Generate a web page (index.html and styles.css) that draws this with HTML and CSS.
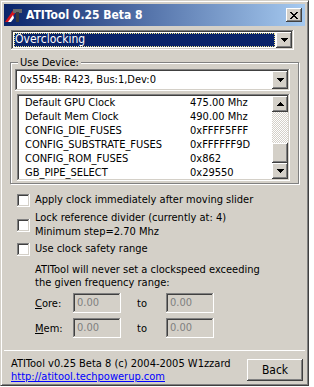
FILE: index.html
```html
<!DOCTYPE html>
<html lang="en">
<head>
  <meta charset="utf-8">
  <title>ATITool 0.25 Beta 8</title>
  <link rel="stylesheet" href="styles.css">
</head>
<body>
  <div class="window">
    <div class="titlebar">
      <svg class="app-icon" width="18" height="16" viewBox="0 0 18 16">
        <polygon points="0,15 9,2 13,2 4,15" fill="#d8141c" />
        <polygon points="3,15 8,8 9,11 6,15" fill="#fff" />
        <rect x="8" y="2" width="9" height="4" fill="#6a6a6a" />
        <rect x="11" y="5" width="3" height="10" fill="#3a3a3a" />
      </svg>
      <span class="title">ATITool 0.25 Beta 8</span>
      <span class="close-btn">
        <svg width="8" height="7" viewBox="0 0 8 7">
          <path d="M0 0h2v1h1v1h2v-1h1v-1h2v1h-1v1h-1v1h-1v1h1v1h1v1h1v1h-2v-1h-1v-1h-2v1h-1v1h-2v-1h1v-1h1v-1h1v-1h-1v-1h-1v-1h-1z" fill="#000" />
        </svg>
      </span>
    </div>

    <div class="panel">
      <div class="combo combo-page">
        <div class="combo-value"><span class="focus">Overclocking</span></div>
        <span class="combo-btn">
          <svg width="7" height="4" viewBox="0 0 7 4"><path d="M0 0h7v1h-1v1h-1v1h-1v1h-1v-1h-1v-1h-1v-1h-1z" /></svg>
        </span>
      </div>

      <div class="group">
        <span class="legend">Use Device:</span>
        <div class="combo combo-device">
          <div class="combo-value">0x554B: R423, Bus:1,Dev:0</div>
          <span class="combo-btn">
            <svg width="7" height="4" viewBox="0 0 7 4"><path d="M0 0h7v1h-1v1h-1v1h-1v1h-1v-1h-1v-1h-1v-1h-1z" /></svg>
          </span>
        </div>
        <div class="listbox">
          <table class="props">
            <tr><td>Default GPU Clock</td><td>475.00 Mhz</td></tr>
            <tr><td>Default Mem Clock</td><td>490.00 Mhz</td></tr>
            <tr><td>CONFIG_DIE_FUSES</td><td>0xFFFF5FFF</td></tr>
            <tr><td>CONFIG_SUBSTRATE_FUSES</td><td>0xFFFFFF9D</td></tr>
            <tr><td>CONFIG_ROM_FUSES</td><td>0x862</td></tr>
            <tr><td>GB_PIPE_SELECT</td><td>0x29550</td></tr>
          </table>
          <div class="scrollbar">
            <span class="sb-btn">
              <svg width="7" height="4" viewBox="0 0 7 4"><path d="M3 0h1v1h1v1h1v1h1v1h-7v-1h1v-1h1v-1h1z" /></svg>
            </span>
            <span class="sb-track"></span>
            <span class="sb-thumb"></span>
            <span class="sb-btn">
              <svg width="7" height="4" viewBox="0 0 7 4"><path d="M0 0h7v1h-1v1h-1v1h-1v1h-1v-1h-1v-1h-1v-1h-1z" /></svg>
            </span>
          </div>
        </div>
      </div>

      <div class="check check-apply">
        <span class="box"></span>
        <span class="check-label">Apply clock immediately after moving slider</span>
      </div>
      <div class="check check-lock">
        <span class="box"></span>
        <span class="check-label">Lock reference divider (currently at: 4)<br>Minimum step=2.70 Mhz</span>
      </div>
      <div class="check check-range">
        <span class="box"></span>
        <span class="check-label">Use clock safety range</span>
      </div>

      <p class="note">ATITool will never set a clockspeed exceeding<br>the given frequency range:</p>

      <div class="range-row">
        <span class="range-label"><u>C</u>ore:</span>
        <span class="field">0.00</span>
        <span class="to">to</span>
        <span class="field">0.00</span>
      </div>
      <div class="range-row">
        <span class="range-label"><u>M</u>em:</span>
        <span class="field">0.00</span>
        <span class="to">to</span>
        <span class="field">0.00</span>
      </div>
    </div>

    <div class="separator"></div>

    <div class="footer">
      <div class="credits">
        ATITool v0.25 Beta 8 (c) 2004-2005 W1zzard<br>
        <a href="#">http://atitool.techpowerup.com</a>
      </div>
      <span class="button">Back</span>
    </div>
  </div>
</body>
</html>
```

FILE: styles.css
```css
body {
  margin: 0;
  background: #fff;
  font-family: "DejaVu Sans Condensed", "DejaVu Sans", sans-serif;
  font-size: 11px;
  color: #000;
}

.window {
  width: 309px;
  height: 386px;
  box-sizing: border-box;
  background: #d4d0c8;
  border: 1px solid;
  border-color: #d4d0c8 #404040 #404040 #d4d0c8;
  box-shadow: inset 1px 1px #fff, inset -1px -1px #808080;
  padding: 3px;
  display: flex;
  flex-direction: column;
}

/* title bar */
.titlebar {
  height: 22px;
  flex: none;
  display: flex;
  align-items: center;
  padding: 0 3px 0 1px;
  background: linear-gradient(to right, #0a246a, #a6caf0);
  color: #fff;
}

.app-icon {
  margin-right: 3px;
}

.title {
  flex: 1;
  font-weight: bold;
  font-size: 12px;
}

.close-btn {
  width: 16px;
  height: 14px;
  display: flex;
  align-items: center;
  justify-content: center;
  background: #d4d0c8;
  box-shadow: inset -1px -1px #404040, inset 1px 1px #fff, inset -2px -2px #808080, inset 2px 2px #d4d0c8;
}

.panel {
  padding: 4px 4px 0 6px;
}

/* combo boxes */
.combo {
  display: flex;
  background: #fff;
  padding: 2px;
  box-shadow: inset -1px -1px #fff, inset 1px 1px #808080, inset -2px -2px #d4d0c8, inset 2px 2px #404040;
}

.combo-page {
  height: 20px;
  box-sizing: border-box;
  margin: 0 7px 0 1px;
}

.combo-page .combo-value {
  flex: 1;
  padding: 1px;
}

.focus {
  display: block;
  height: 100%;
  box-sizing: border-box;
  background: #0a246a;
  color: #fff;
  font-size: 12px;
  line-height: 12px;
  padding-left: 1px;
  outline: 1px dotted #f0e68c;
  outline-offset: -1px;
}

.combo-btn {
  width: 16px;
  display: flex;
  align-items: center;
  justify-content: center;
  background: #d4d0c8;
  box-shadow: inset -1px -1px #404040, inset 1px 1px #fff, inset -2px -2px #808080, inset 2px 2px #d4d0c8;
}

/* group box */
.group {
  position: relative;
  margin: 12px 2px 0 0;
  padding: 6px 8px 2px 4px;
  border: 1px solid #808080;
  box-shadow: inset 1px 1px #fff, 1px 1px #fff;
}

.legend {
  position: absolute;
  top: -7px;
  left: 7px;
  padding: 0 2px;
  background: #d4d0c8;
}

.combo-device {
  height: 22px;
  box-sizing: border-box;
}

.combo-device .combo-value {
  flex: 1;
  line-height: 18px;
  padding-left: 3px;
}

.listbox {
  display: flex;
  height: 87px;
  box-sizing: border-box;
  margin: 3px 0 0 2px;
  padding: 2px;
  background: #fff;
  box-shadow: inset -1px -1px #fff, inset 1px 1px #808080, inset -2px -2px #d4d0c8, inset 2px 2px #404040;
}

.props {
  flex: 1;
  border-collapse: collapse;
  align-self: flex-start;
}

.props td {
  height: 14px;
  padding: 0;
  line-height: 14px;
  white-space: nowrap;
}

.props td:first-child {
  width: 165px;
  padding-left: 6px;
}

.scrollbar {
  width: 16px;
  display: flex;
  flex-direction: column;
}

.sb-btn {
  height: 16px;
  display: flex;
  align-items: center;
  justify-content: center;
  background: #d4d0c8;
  box-shadow: inset -1px -1px #404040, inset 1px 1px #fff, inset -2px -2px #808080, inset 2px 2px #d4d0c8;
}

.sb-track {
  flex: 1;
  background: repeating-conic-gradient(#d4d0c8 0 25%, #fff 0 50%) 0 0 / 2px 2px;
}

.sb-thumb {
  height: 20px;
  background: #d4d0c8;
  box-shadow: inset -1px -1px #404040, inset 1px 1px #fff, inset -2px -2px #808080, inset 2px 2px #d4d0c8;
}

/* checkboxes */
.check {
  display: flex;
  align-items: center;
  line-height: 14px;
}

.box {
  width: 13px;
  height: 13px;
  box-sizing: border-box;
  margin: 0 5px 0 7px;
  background: #fff;
  box-shadow: inset -1px -1px #fff, inset 1px 1px #808080, inset -2px -2px #d4d0c8, inset 2px 2px #404040;
}

.check-apply {
  margin-top: 9px;
}

.check-lock {
  margin-top: 4px;
}

.check-range {
  margin-top: 3px;
}

.note {
  margin: 7px 0 0 25px;
  line-height: 13px;
}

.range-row {
  display: flex;
  align-items: center;
  margin: 4px 0 0 25px;
}

.range-row + .range-row {
  margin-top: 5px;
}

.range-label {
  width: 38px;
}

.field {
  width: 48px;
  height: 20px;
  box-sizing: border-box;
  padding-left: 4px;
  line-height: 19px;
  color: #808080;
  box-shadow: inset -1px -1px #fff, inset 1px 1px #808080, inset -2px -2px #d4d0c8, inset 2px 2px #404040;
}

.to {
  width: 45px;
  padding-left: 16px;
  box-sizing: border-box;
}

.separator {
  margin-top: 12px;
  height: 1px;
  border-bottom: 1px solid #fff;
  background: #808080;
}

.footer {
  display: flex;
  align-items: flex-start;
  padding: 6px 2px 0 7px;
}

.credits {
  flex: 1;
  line-height: 13px;
}

.credits a {
  color: #0000ff;
}

.button {
  width: 56px;
  height: 22px;
  margin-top: 2px;
  display: flex;
  align-items: center;
  justify-content: center;
  font-size: 12px;
  box-shadow: inset -1px -1px #404040, inset 1px 1px #fff, inset -2px -2px #808080, inset 2px 2px #d4d0c8;
}
```
